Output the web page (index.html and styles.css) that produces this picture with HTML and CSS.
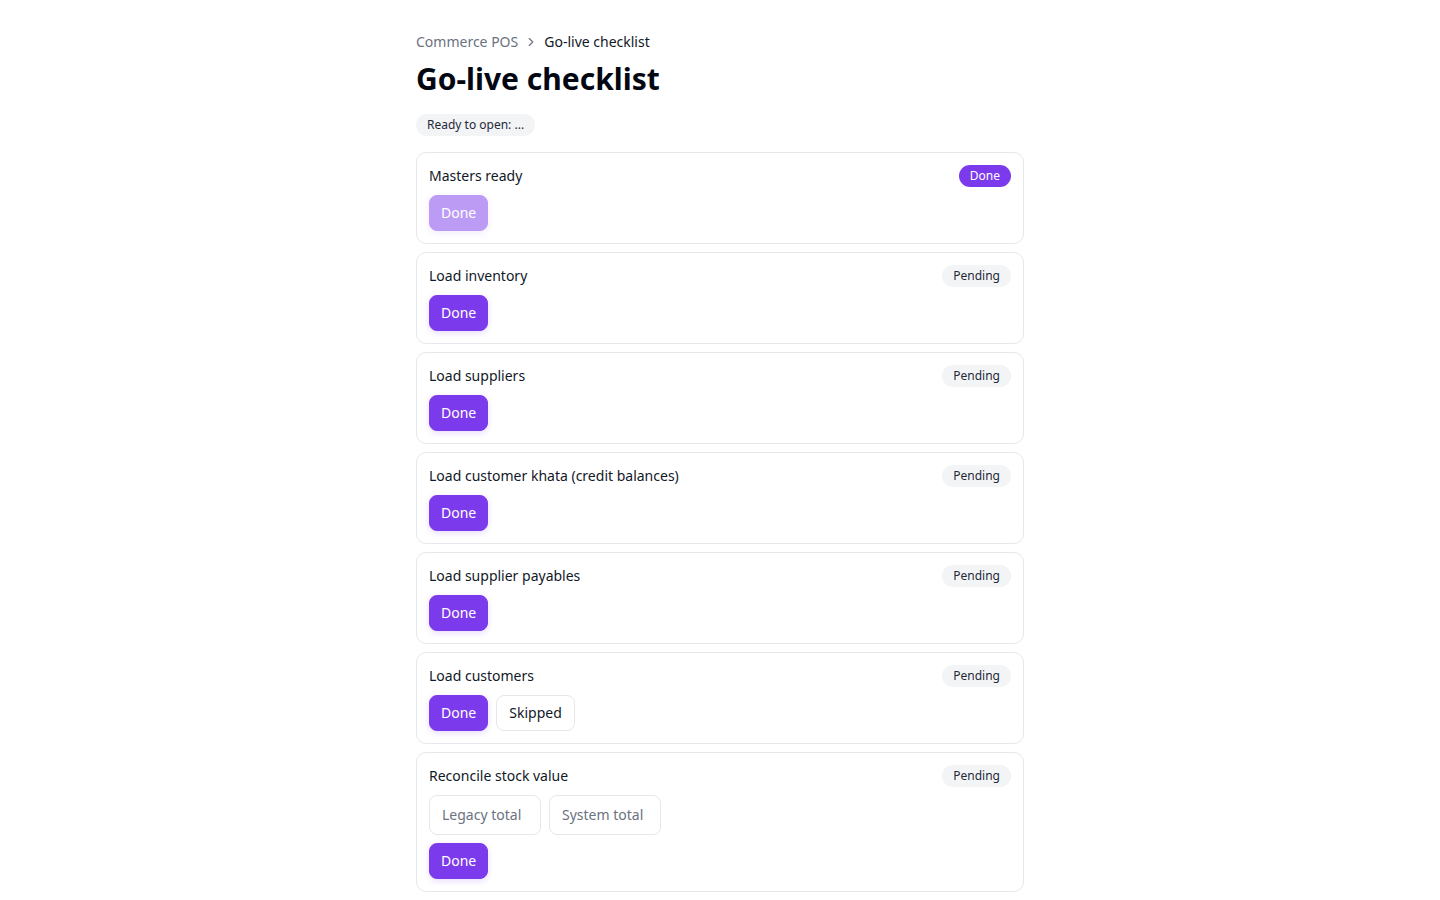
FILE: index.html
```html
<!DOCTYPE html>
<html lang="en">
<head>
    <meta charset="UTF-8">
    <meta name="viewport" content="width=device-width, initial-scale=1.0">
    <title>Go-live checklist</title>
    <link rel="stylesheet" href="styles.css">
</head>
<body>
    <main class="page">
        <nav class="crumbs">
            <a href="#">Commerce POS</a>
            <svg class="chev" width="14" height="14" viewBox="0 0 24 24" fill="none" stroke="currentColor" stroke-width="2" stroke-linecap="round" stroke-linejoin="round"><path d="M9 18l6-6-6-6"/></svg>
            <span>Go-live checklist</span>
        </nav>
        <h1>Go-live checklist</h1>
        <div class="ready">Ready to open: ...</div>

        <ul class="steps">
            <li class="step">
                <div class="step-head">
                    <span class="step-name">Masters ready</span>
                    <span class="badge badge-done">Done</span>
                </div>
                <div class="step-actions">
                    <button class="btn" disabled>Done</button>
                </div>
            </li>
            <li class="step">
                <div class="step-head">
                    <span class="step-name">Load inventory</span>
                    <span class="badge">Pending</span>
                </div>
                <div class="step-actions">
                    <button class="btn">Done</button>
                </div>
            </li>
            <li class="step">
                <div class="step-head">
                    <span class="step-name">Load suppliers</span>
                    <span class="badge">Pending</span>
                </div>
                <div class="step-actions">
                    <button class="btn">Done</button>
                </div>
            </li>
            <li class="step">
                <div class="step-head">
                    <span class="step-name">Load customer khata (credit balances)</span>
                    <span class="badge">Pending</span>
                </div>
                <div class="step-actions">
                    <button class="btn">Done</button>
                </div>
            </li>
            <li class="step">
                <div class="step-head">
                    <span class="step-name">Load supplier payables</span>
                    <span class="badge">Pending</span>
                </div>
                <div class="step-actions">
                    <button class="btn">Done</button>
                </div>
            </li>
            <li class="step">
                <div class="step-head">
                    <span class="step-name">Load customers</span>
                    <span class="badge">Pending</span>
                </div>
                <div class="step-actions">
                    <button class="btn">Done</button>
                    <button class="btn btn-outline">Skipped</button>
                </div>
            </li>
            <li class="step">
                <div class="step-head">
                    <span class="step-name">Reconcile stock value</span>
                    <span class="badge">Pending</span>
                </div>
                <div class="step-actions">
                    <input class="field" type="text" placeholder="Legacy total">
                    <input class="field" type="text" placeholder="System total">
                </div>
                <div class="step-actions">
                    <button class="btn">Done</button>
                </div>
            </li>
        </ul>
    </main>
</body>
</html>
```

FILE: styles.css
```css
/* Base */
* {
    box-sizing: border-box;
}
body {
    margin: 0;
    font-family: "Noto Sans", "Open Sans", Arial, sans-serif;
    color: #111827;
    background-color: #fff;
}
.page {
    max-width: 640px;
    margin: 0 auto;
    padding: 32px 16px;
}

/* Header */
.crumbs {
    display: flex;
    align-items: center;
    gap: 6px;
    font-size: 14px;
    line-height: 20px;
    color: #111827;
}
.crumbs a {
    color: #6b7280;
    text-decoration: none;
}
.crumbs .chev {
    color: #6b7280;
}
h1 {
    margin: 9px 0 15px;
    font-size: 30px;
    line-height: 36px;
    font-weight: 700;
    color: #030712;
}
.ready {
    display: inline-block;
    padding: 1px 11px;
    font-size: 12px;
    line-height: 20px;
    background-color: #f3f4f6;
    border-radius: 999px;
    color: #1f2937;
}

/* Checklist */
.steps {
    list-style: none;
    margin: 16px 0 0;
    padding: 0;
    display: flex;
    flex-direction: column;
    gap: 8px;
}
.step {
    border: 1px solid #e5e7eb;
    border-radius: 10px;
    padding: 12px;
    display: flex;
    flex-direction: column;
    gap: 8px;
}
.step-head {
    display: flex;
    align-items: center;
    justify-content: space-between;
    min-height: 22px;
}
.step-name {
    font-size: 14px;
    line-height: 20px;
}
.badge {
    padding: 1px 11px;
    font-size: 12px;
    line-height: 20px;
    border-radius: 999px;
    background-color: #f3f4f6;
    color: #1f2937;
}
.badge-done {
    background-color: #7c3aed;
    color: #fff;
}
.step-actions {
    display: flex;
    gap: 8px;
}

.btn {
    height: 36px;
    padding: 0 11px 1px;
    font-family: inherit;
    font-size: 14px;
    color: #fff;
    background-color: #7c3aed;
    border: 1px solid #7c3aed;
    border-radius: 8px;
    box-shadow: 0 2px 6px rgba(124, 58, 237, 0.18);
    cursor: pointer;
}
.btn:disabled {
    opacity: 0.5;
    cursor: default;
}
.btn-outline {
    padding: 0 12px 1px;
    color: #111827;
    background-color: #fff;
    border-color: #e5e7eb;
    box-shadow: none;
}
.field {
    width: 112px;
    height: 40px;
    padding: 0 12px 1px;
    font-family: inherit;
    font-size: 14px;
    color: #111827;
    border: 1px solid #e5e7eb;
    border-radius: 8px;
    outline: none;
}
.field::placeholder {
    color: #6b7280;
}
```
